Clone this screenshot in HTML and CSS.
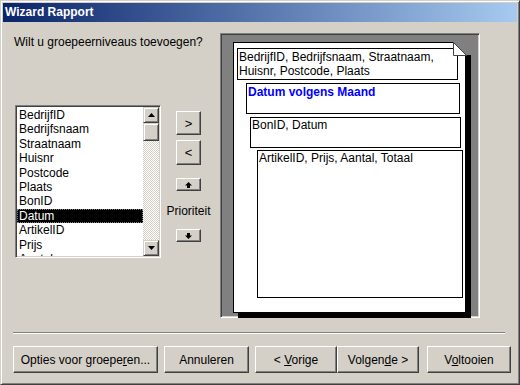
FILE: index.html
```html
<!DOCTYPE html>
<html lang="nl">
<head>
  <meta charset="UTF-8">
  <title>Wizard Rapport</title>
  <link rel="stylesheet" href="styles.css">
</head>
<body>
  <div class="window">
    <div class="titlebar">Wizard Rapport</div>
    <div class="client">
      <div class="main">
        <div class="left">
          <p class="question">Wilt u groepeerniveaus toevoegen?</p>
          <div class="picker">
            <div class="listbox">
              <ul class="items">
                <li>BedrijfID</li>
                <li>Bedrijfsnaam</li>
                <li>Straatnaam</li>
                <li>Huisnr</li>
                <li>Postcode</li>
                <li>Plaats</li>
                <li>BonID</li>
                <li class="selected">Datum</li>
                <li>ArtikelID</li>
                <li>Prijs</li>
                <li>Aantal</li>
                <li>Totaal</li>
              </ul>
              <div class="scrollbar">
                <div class="sb-btn">
                  <svg width="7" height="4" viewBox="0 0 7 4"><polygon points="3.5,0 7,4 0,4" fill="#000"/></svg>
                </div>
                <div class="sb-thumb"></div>
                <div class="sb-track"></div>
                <div class="sb-btn">
                  <svg width="7" height="4" viewBox="0 0 7 4"><polygon points="0,0 7,0 3.5,4" fill="#000"/></svg>
                </div>
              </div>
            </div>
            <div class="movers">
              <button class="btn mover">&gt;</button>
              <button class="btn mover mover-back">&lt;</button>
              <button class="btn prio prio-up">
                <svg width="7" height="6" viewBox="0 0 7 6"><polygon points="3.5,0 7,3.5 5,3.5 5,6 2,6 2,3.5 0,3.5" fill="#000"/></svg>
              </button>
              <span class="prio-label">Prioriteit</span>
              <button class="btn prio prio-down">
                <svg width="7" height="6" viewBox="0 0 7 6"><polygon points="2,0 5,0 5,2.5 7,2.5 3.5,6 0,2.5 2,2.5" fill="#000"/></svg>
              </button>
            </div>
          </div>
        </div>

        <div class="preview">
          <div class="page">
            <div class="level level-1">BedrijfID, Bedrijfsnaam, Straatnaam,<br>Huisnr, Postcode, Plaats</div>
            <div class="level level-2">Datum volgens Maand</div>
            <div class="level level-3">BonID, Datum</div>
            <div class="level level-4">ArtikelID, Prijs, Aantal, Totaal</div>
            <!-- folded corner -->
            <svg class="fold" width="20" height="16" viewBox="0 0 20 16">
              <polygon points="1,0 20,0 20,13 14,13" fill="#808080"/>
              <polygon points="1.5,0.5 14.5,13.5 1.5,13.5" fill="#fff" stroke="#404040" stroke-width="1"/>
            </svg>
          </div>
        </div>
      </div>

      <div class="separator"></div>

      <div class="actions">
        <button class="btn action opties"><span>Opties voor groepe<u>r</u>en...</span></button>
        <button class="btn action annuleren"><span>Annuleren</span></button>
        <button class="btn action vorige"><span>&lt; <u>V</u>orige</span></button>
        <button class="btn action volgende"><span>Volgen<u>d</u>e &gt;</span></button>
        <button class="btn action voltooien"><span>V<u>o</u>ltooien</span></button>
      </div>
    </div>
  </div>
</body>
</html>
```

FILE: styles.css
```css
body {
  margin: 0;
  font-family: "Liberation Sans", Arial, sans-serif;
  font-size: 12px;
  color: #000;
  background-color: #d4d0c8;
}
.window {
  width: 520px;
  height: 385px;
  box-sizing: border-box;
  padding: 2px;
  border: 1px solid;
  border-color: #d4d0c8 #404040 #404040 #d4d0c8;
  box-shadow: inset 1px 1px #fff, inset -1px -1px #808080;
  background-color: #d4d0c8;
}
.titlebar {
  height: 19px;
  line-height: 19px;
  padding-left: 2px;
  font-weight: bold;
  color: #fff;
  background: linear-gradient(to right, #0a246a, #a6caf0);
}
.main {
  display: flex;
  padding: 11px 0 0 12px;
}
.left {
  width: 205px;
}
.question {
  margin: 2px 0 0 -1px;
  line-height: 14px;
}
.picker {
  display: flex;
  margin-top: 56px;
}

/* listbox */
.listbox {
  display: flex;
  width: 146px;
  height: 153px;
  box-sizing: border-box;
  border: 1px solid;
  border-color: #808080 #fff #fff #808080;
  box-shadow: inset 1px 1px #404040, inset -1px -1px #d4d0c8;
  padding: 1px;
  background-color: #fff;
}
.items {
  flex: 1;
  margin: 0;
  padding: 1px 0 0;
  list-style: none;
  overflow: hidden;
}
.items li {
  height: 14.4px;
  line-height: 14.4px;
  padding-left: 2px;
  white-space: nowrap;
}
.items li.selected {
  background-color: #000;
  color: #fff;
  outline: 1px dotted #808080;
  outline-offset: -1px;
}
.scrollbar {
  display: flex;
  flex-direction: column;
  width: 16px;
}
.sb-btn, .sb-thumb {
  box-sizing: border-box;
  border: 1px solid;
  border-color: #d4d0c8 #404040 #404040 #d4d0c8;
  box-shadow: inset 1px 1px #fff, inset -1px -1px #808080;
  background-color: #d4d0c8;
}
.sb-btn {
  display: flex;
  justify-content: center;
  align-items: center;
  height: 16px;
}
.sb-thumb {
  height: 18px;
}
.sb-track {
  flex: 1;
  background: repeating-conic-gradient(#fff 0 25%, #d4d0c8 0 50%) 0 0 / 2px 2px;
}

/* buttons */
.btn {
  display: flex;
  justify-content: center;
  align-items: center;
  padding: 0;
  box-sizing: border-box;
  border: 1px solid;
  border-color: #fff #404040 #404040 #fff;
  box-shadow: inset -1px -1px #808080, inset 1px 1px #d4d0c8;
  background-color: #d4d0c8;
  font: inherit;
  color: #000;
}
.movers {
  display: flex;
  flex-direction: column;
  align-items: center;
  width: 25px;
  margin-left: 15px;
  padding-top: 6px;
}
.mover {
  width: 25px;
  height: 24px;
  font-size: 13px;
}
.mover-back {
  margin-top: 5px;
  height: 25px;
}
.prio {
  width: 25px;
  height: 13px;
}
.prio-up {
  margin-top: 13px;
}
.prio-label {
  margin-top: 13px;
  line-height: 14px;
  white-space: nowrap;
}
.prio-down {
  margin-top: 11px;
}

/* preview of the report */
.preview {
  width: 260px;
  height: 285px;
  box-sizing: border-box;
  border: 1px solid;
  border-color: #808080 #fff #fff #808080;
  box-shadow: inset 1px 1px #404040, inset -1px -1px #d4d0c8;
  padding: 1px;
  background-color: #808080;
}
.page {
  position: relative;
  width: 233px;
  height: 271px;
  box-sizing: border-box;
  margin: 7px 0 0 11px;
  border: 1px solid #000;
  background-color: #fff;
  box-shadow: 5px 5px 0 #000;
}
.fold {
  position: absolute;
  top: -1px;
  right: -7px;
  display: block;
}
.level {
  box-sizing: border-box;
  border: 1px solid #000;
  padding: 0 1px;
  line-height: 14px;
  white-space: nowrap;
}
.level-1 {
  width: 221px;
  height: 32px;
  margin: 5px 0 0 3px;
  padding-top: 1px;
}
.level-2 {
  width: 214px;
  height: 31px;
  margin: 3px 0 0 12px;
  padding-top: 1px;
  font-weight: bold;
  color: #0000ff;
}
.level-3 {
  width: 211px;
  height: 31px;
  margin: 3px 0 0 16px;
}
.level-4 {
  width: 206px;
  height: 148px;
  margin: 2px 0 0 23px;
}

.separator {
  margin: 14px 12px 0 10px;
  border-top: 1px solid #808080;
  border-bottom: 1px solid #fff;
}
.actions {
  display: flex;
  margin-top: 12px;
  padding-left: 10px;
}
.action {
  height: 27px;
}
.opties { width: 145px; }
.annuleren { width: 85px; margin-left: 6px; }
.vorige { width: 82px; margin-left: 6px; }
.volgende { width: 82px; }
.voltooien { width: 84px; margin-left: 8px; }
```
